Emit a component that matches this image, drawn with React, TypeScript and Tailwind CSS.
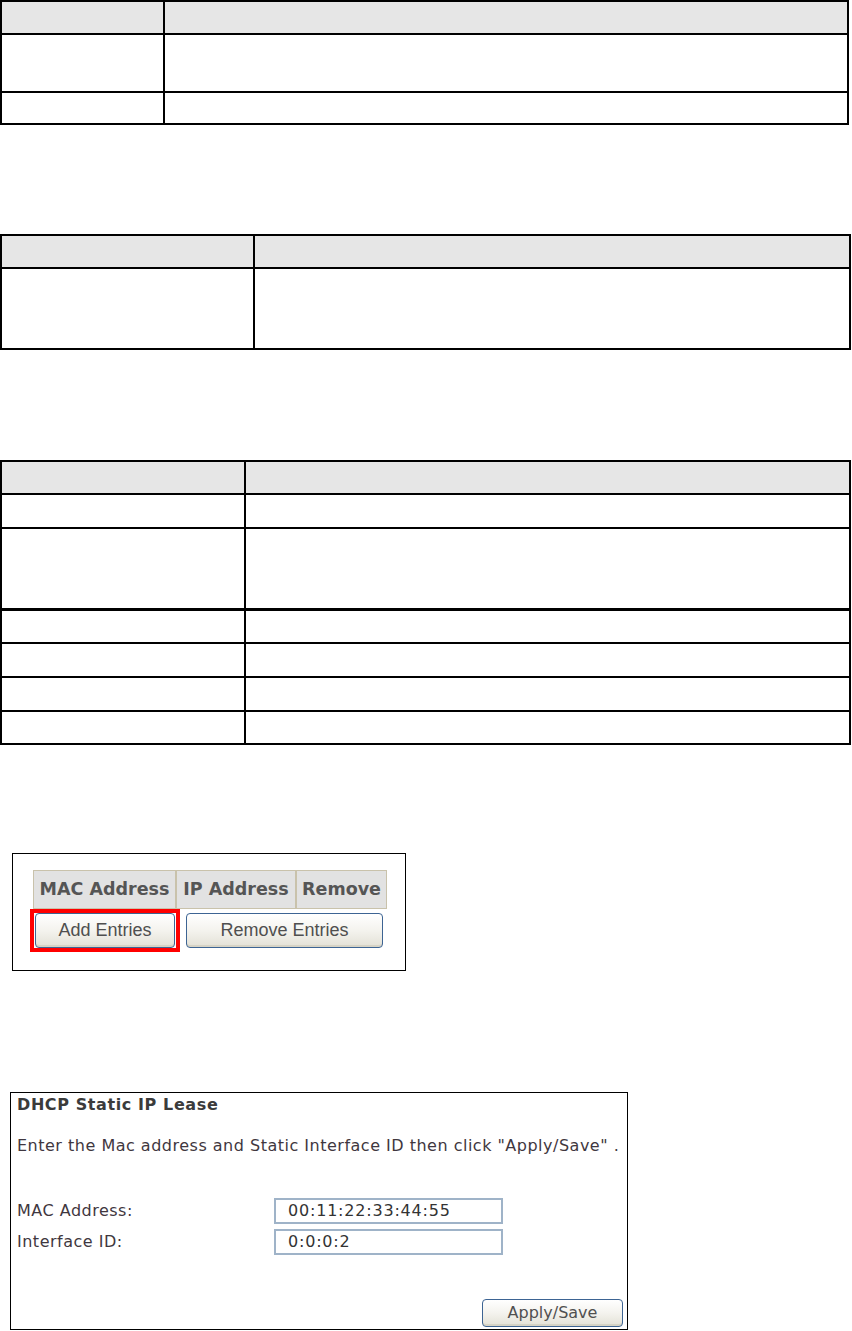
import React from "react"

const verdana = { fontFamily: '"DejaVu Sans", Verdana, sans-serif' }
const tahoma = { fontFamily: '"Liberation Sans", Tahoma, Arial, sans-serif' }

function Row({ h, first, col, thick }: { h: number; first?: boolean; col: number; thick?: boolean }) {
  return (
    <div
      className={`flex ${first ? "bg-[#e6e6e6]" : ""} ${first ? "" : thick ? "border-t-[3px] border-black" : "border-t-2 border-black"}`}
      style={{ height: h }}
    >
      <div className="border-r-2 border-black" style={{ width: col }} />
      <div className="flex-1" />
    </div>
  )
}

function XpButton({ label, w }: { label: string; w: number }) {
  return (
    <button
      className="h-[35px] rounded-[4px] border border-[#3d6493] bg-gradient-to-b from-[#ffffff] via-[#f4f3ee] to-[#e3e1d6] text-[18px] text-[#4f4f4f] shadow-[inset_0_-2px_0_#d6d3c5]"
      style={{ ...tahoma, width: w }}
    >
      {label}
    </button>
  )
}

export default function App() {
  return (
    <div className="w-[852px] h-[1331px] bg-white overflow-hidden" style={verdana}>
      {/* table 1 */}
      <div className="w-[849px] border-2 border-black">
        <Row h={31} first col={163} />
        <Row h={58} col={163} />
        <Row h={32} col={163} />
      </div>

      {/* table 2 */}
      <div className="mt-[109px] w-[851px] border-2 border-black">
        <Row h={31} first col={253} />
        <Row h={81} col={253} />
      </div>

      {/* table 3 */}
      <div className="mt-[110px] w-[851px] border-2 border-black">
        <Row h={31} first col={244} />
        <Row h={34} col={244} />
        <Row h={81} col={244} />
        <Row h={34} col={244} thick />
        <Row h={34} col={244} />
        <Row h={34} col={244} />
        <Row h={33} col={244} />
      </div>

      {/* static ip list screenshot */}
      <div className="ml-[12px] mt-[108px] w-[394px] h-[118px] border-[1.5px] border-black pl-[20px] pt-[16px]">
        <div className="flex w-[354px] h-[39px] bg-[#e2e2e2] border border-[#c9c2ab] text-[17.5px] font-bold text-[#555555]">
          <div className="w-[143px] flex items-center justify-center border-r-2 border-[#c9c2ab]">MAC Address</div>
          <div className="w-[120px] flex items-center justify-center border-r-2 border-[#c9c2ab]">IP Address</div>
          <div className="flex-1 flex items-center justify-center">Remove</div>
        </div>
        <div className="flex gap-[11px] mt-[4px] pl-[2px]">
          <div className="relative">
            <XpButton label="Add Entries" w={140} />
            <div className="absolute -left-[5px] -top-[4px] w-[150px] h-[43px] border-4 border-[#ff0000]" />
          </div>
          <XpButton label="Remove Entries" w={197} />
        </div>
      </div>

      {/* dhcp static ip lease screenshot */}
      <div className="ml-[10px] mt-[121px] w-[618px] h-[238px] border-[1.5px] border-black pl-[6px] pr-[4px] text-[#3f3740]">
        <div className="text-[16px] font-bold tracking-[0.6px] text-[#3b3b3b]">DHCP Static IP Lease</div>
        <div className="mt-[17px] text-[16px] tracking-[0.5px]">Enter the Mac address and Static Interface ID then click "Apply/Save" .</div>
        <div className="mt-[40px] flex items-center h-[26px]">
          <div className="w-[257px] text-[16px] tracking-[0.5px]">MAC Address:</div>
          <div className="w-[229px] h-[26px] border-2 border-[#9fb3c8] pl-[12px] text-[16px] tracking-[0.8px] leading-[22px] text-[#333333]">00:11:22:33:44:55</div>
        </div>
        <div className="mt-[5px] flex items-center h-[26px]">
          <div className="w-[257px] text-[16px] tracking-[0.5px]">Interface ID:</div>
          <div className="w-[229px] h-[26px] border-2 border-[#9fb3c8] pl-[12px] text-[16px] tracking-[0.8px] leading-[22px] text-[#333333]">0:0:0:2</div>
        </div>
        <div className="mt-[44px] flex justify-end">
          <button
            className="w-[141px] h-[28px] rounded-[4px] border border-[#3d6493] bg-gradient-to-b from-[#ffffff] via-[#f4f3ee] to-[#e3e1d6] text-[16px] text-[#505050] shadow-[inset_0_-2px_0_#d6d3c5]"
            style={verdana}
          >
            Apply/Save
          </button>
        </div>
      </div>
    </div>
  )
}
